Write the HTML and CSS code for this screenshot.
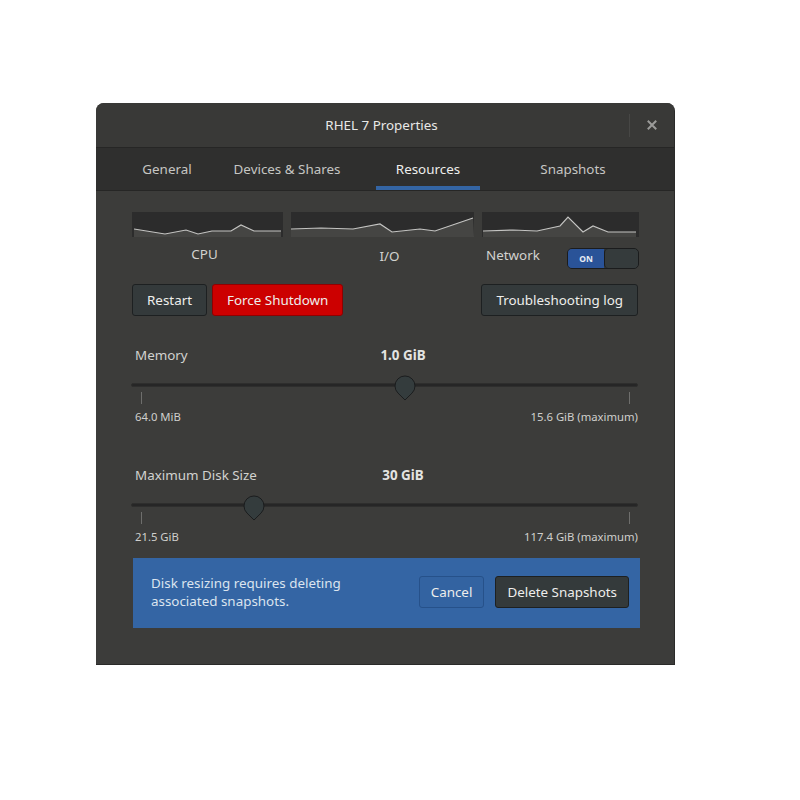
FILE: index.html
```html
<!DOCTYPE html>
<html>
<head>
<meta charset="utf-8">
<link rel="stylesheet" href="styles.css">
</head>
<body>
<div class="window">
  <div class="header">
    <div class="title">RHEL 7 Properties</div>
    <div class="sep"></div>
    <div class="close">
      <svg width="10" height="10" viewBox="0 0 10 10"><path d="M1.5 1.5 L8.5 8.5 M8.5 1.5 L1.5 8.5" stroke="#9b9b99" stroke-width="2" stroke-linecap="square"/></svg>
    </div>
  </div>
  <div class="tabs">
    <div class="tab t1">General</div>
    <div class="tab t2">Devices &amp; Shares</div>
    <div class="tab t3 active">Resources</div>
    <div class="tab t4">Snapshots</div>
  </div>
  <div class="content">
    <div class="graphs">
      <svg class="graph" width="151" height="25" viewBox="0 0 151 25">
        <rect width="151" height="25" fill="#2c2c2c"/>
        <path d="M2 17 L33 22 L54 18 L66 22 L80 19 L99 19 L109 13 L122 19 L149 19 L149 25 L2 25 Z" fill="#454543"/>
        <path d="M2 17 L33 22 L54 18 L66 22 L80 19 L99 19 L109 13 L122 19 L149 19" fill="none" stroke="#c4c4c2" stroke-width="1.2"/>
      </svg>
      <svg class="graph" width="183" height="25" viewBox="0 0 183 25">
        <rect width="183" height="25" fill="#2c2c2c"/>
        <path d="M0 17 L30 16 L62 17 L89 12 L101 20 L129 17 L144 19 L182 6 L183 25 L0 25 Z" fill="#454543"/>
        <path d="M0 17 L30 16 L62 17 L89 12 L101 20 L129 17 L144 19 L182 6" fill="none" stroke="#c4c4c2" stroke-width="1.2"/>
      </svg>
      <svg class="graph" width="157" height="25" viewBox="0 0 157 25">
        <rect width="157" height="25" fill="#2c2c2c"/>
        <path d="M1 19 L31 18 L55 19 L78 14 L86 5 L101 20 L111 14 L126 20 L154 20 L154 25 L1 25 Z" fill="#454543"/>
        <path d="M1 19 L31 18 L55 19 L78 14 L86 5 L101 20 L111 14 L126 20 L154 20" fill="none" stroke="#c4c4c2" stroke-width="1.2"/>
      </svg>
    </div>
    <div class="labels">
      <div class="glabel cpu">CPU</div>
      <div class="glabel io">I/O</div>
      <div class="netcell">
        <div class="glabel net">Network</div>
        <div class="switch"><div class="on">ON</div><div class="knob"></div></div>
      </div>
    </div>
    <div class="buttons">
      <div class="left-btns">
        <div class="btn">Restart</div>
        <div class="btn danger">Force Shutdown</div>
      </div>
      <div class="btn">Troubleshooting log</div>
    </div>

    <div class="setting mem">
      <div class="srow"><div class="sname">Memory</div><div class="sval">1.0 GiB</div></div>
      <div class="slider">
        <div class="track"></div>
        <div class="ticks"><span class="tick"></span><span class="tick"></span></div>
        <svg class="thumb" style="left: 264px" width="22" height="26" viewBox="0 0 22 26"><path d="M11 25 L4 18.1 A10 10 0 1 1 18 18.1 Z" fill="#343c3d" stroke="#1b1d1e" stroke-width="1"/></svg>
      </div>
      <div class="range"><span>64.0 MiB</span><span>15.6 GiB (maximum)</span></div>
    </div>

    <div class="setting disk">
      <div class="srow"><div class="sname">Maximum Disk Size</div><div class="sval">30 GiB</div></div>
      <div class="slider">
        <div class="track"></div>
        <div class="ticks"><span class="tick"></span><span class="tick"></span></div>
        <svg class="thumb" style="left: 113px" width="22" height="26" viewBox="0 0 22 26"><path d="M11 25 L4 18.1 A10 10 0 1 1 18 18.1 Z" fill="#343c3d" stroke="#1b1d1e" stroke-width="1"/></svg>
      </div>
      <div class="range"><span>21.5 GiB</span><span>117.4 GiB (maximum)</span></div>
    </div>

    <div class="infobar">
      <div class="msg">Disk resizing requires deleting<br>associated snapshots.</div>
      <div class="ibtns">
        <div class="btn cancel">Cancel</div>
        <div class="btn delete">Delete Snapshots</div>
      </div>
    </div>
  </div>
</div>
</body>
</html>
```

FILE: styles.css
```css
html, body {
  margin: 0;
  padding: 0;
  background: #ffffff;
}
body {
  font-family: "Noto Sans", "DejaVu Sans", sans-serif;
  font-size: 13.4px;
  color: #eeeeec;
}
.window {
  margin-left: 96px;
  margin-top: 103px;
  width: 579px;
  height: 562px;
  background: #3c3c3a;
  border-radius: 8px 8px 0 0;
  box-sizing: border-box;
  border-right: 1px solid #2a2a29;
  border-bottom: 1px solid #2a2a29;
  overflow: hidden;
}
.header {
  height: 44px;
  background: #393937;
  border-bottom: 1px solid #262625;
  display: flex;
  align-items: center;
}
.title {
  flex: 1;
  text-align: center;
  padding-left: 38px;
  color: #e8e8e6;
}
.sep {
  width: 1px;
  height: 23px;
  background: #474745;
}
.close {
  width: 44px;
  display: flex;
  justify-content: center;
  align-items: center;
}
.close svg { display: block; }
.tabs {
  height: 42px;
  background: #2f2f2e;
  border-bottom: 1px solid #262625;
  display: flex;
  padding-left: 29px;
}
.tab {
  height: 42px;
  line-height: 42px;
  text-align: center;
  color: #c6c6c3;
  box-sizing: border-box;
}
.tab.t1 { width: 84px; }
.tab.t2 { width: 144px; margin-left: 6px; }
.tab.t3 { width: 104px; margin-left: 17px; }
.tab.t4 { width: 106px; margin-left: 40px; }
.tab.active {
  color: #eeeeec;
  border-bottom: 4px solid #3465a4;
  line-height: 42px;
}
.content {
  padding: 21px 36px 0 36px;
}
.graphs {
  display: grid;
  grid-template-columns: 151px 183px 157px;
  column-gap: 8px;
  height: 25px;
}
.graph { display: block; }
.labels {
  display: grid;
  grid-template-columns: 151px 183px 157px;
  column-gap: 8px;
  margin-top: 7px;
  height: 25px;
}
.glabel {
  line-height: 20px;
  color: #d2d2cf;
}
.cpu { text-align: center; padding-right: 6px; }
.io { text-align: center; padding-top: 2px; padding-left: 14px; }
.netcell {
  display: flex;
  justify-content: space-between;
  align-items: flex-start;
}
.net { padding-left: 4px; padding-top: 1px; }
.switch {
  margin-top: 4px;
  width: 72px;
  height: 21px;
  box-sizing: border-box;
  border: 1px solid #1b1c1d;
  border-radius: 5px;
  display: flex;
  overflow: hidden;
  background: #343a3b;
}
.switch .on {
  width: 36px;
  background: #2a5398;
  color: #e6ecf4;
  font-size: 8.5px;
  font-weight: bold;
  text-align: center;
  line-height: 19px;
}
.switch .knob {
  flex: 1;
  background: #353b3c;
  border-left: 1px solid #1b1c1d;
  border-radius: 4px;
}
.buttons {
  display: flex;
  justify-content: space-between;
  margin-top: 15px;
}
.left-btns {
  display: flex;
  gap: 5px;
}
.btn {
  height: 32px;
  box-sizing: border-box;
  line-height: 30px;
  padding: 0 14px;
  background: #343a3b;
  border: 1px solid #1d2021;
  border-radius: 3px;
  color: #eeeeec;
  white-space: nowrap;
}
.btn.danger {
  background: #cc0000;
  border-color: #8f0000;
}
.setting { margin-top: 29px; }
.setting.disk { margin-top: 40px; }
.srow {
  display: grid;
  grid-template-columns: 233px 76px;
  line-height: 20px;
}
.sname { padding-left: 3px; color: #d2d2cf; }
.sval { text-align: center; font-weight: bold; color: #e4e4e2; }
.slider {
  position: relative;
  height: 40px;
  margin-left: -1px;
}
.track {
  position: absolute;
  left: 0;
  right: 0;
  top: 18px;
  height: 4px;
  background: #262626;
  border: 1px solid #2e2e2d;
  border-radius: 3px;
  box-sizing: border-box;
}
.ticks {
  position: absolute;
  left: 10px;
  right: 8px;
  top: 27px;
  display: flex;
  justify-content: space-between;
}
.tick {
  width: 1px;
  height: 12px;
  background: #6e6e6c;
}
.thumb {
  position: absolute;
  top: 10px;
  margin-left: -1px;
}
.range {
  display: flex;
  justify-content: space-between;
  font-size: 11.3px;
  line-height: 16px;
  margin-top: 4px;
  padding-left: 3px;
  color: #cfcfcc;
}
.infobar {
  margin-top: 13px;
  margin-left: 1px;
  margin-right: -2px;
  height: 70px;
  background: #3465a4;
  display: flex;
  justify-content: space-between;
  align-items: center;
  padding: 0 11px 0 18px;
}
.msg {
  line-height: 18px;
  color: #dbe4ef;
  margin-top: -2px;
}
.ibtns {
  display: flex;
  gap: 11px;
  margin-top: -2px;
}
.btn.cancel {
  background: #3363a1;
  border-color: #26518a;
  padding: 0 11px;
}
.btn.delete {
  padding: 0 11px;
}
```
